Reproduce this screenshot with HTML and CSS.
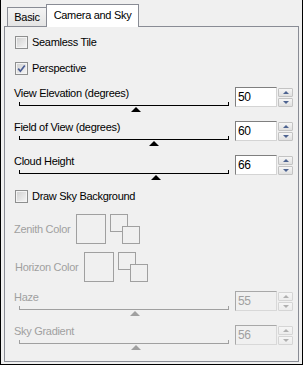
FILE: index.html
```html
<!DOCTYPE html>
<html lang="en">
<head>
    <meta charset="UTF-8">
    <title>Camera and Sky</title>
    <link rel="stylesheet" href="styles.css">
</head>
<body>
    <div class="window">
        <div class="tabs">
            <div class="tab">Basic</div>
            <div class="tab active">Camera and Sky</div>
        </div>
        <div class="panel">
            <label class="check first"><span class="cb"></span>Seamless Tile</label>
            <label class="check second"><span class="cb"><svg width="9" height="9" viewBox="0 0 9 9"><path d="M1.2 4.6 L3.4 7.2 L7.8 1.4" fill="none" stroke="#4a5d94" stroke-width="1.7"/></svg></span>Perspective</label>

            <div class="slider top-slider">
                <div class="slider-main">
                    <div class="slider-label">View Elevation (degrees)</div>
                    <div class="track"><span class="thumb" style="left:111px"></span></div>
                </div>
                <div class="num">50</div>
                <div class="spin"><span class="btn"><i class="up"></i></span><span class="btn"><i class="down"></i></span></div>
            </div>
            <div class="slider">
                <div class="slider-main">
                    <div class="slider-label">Field of View (degrees)</div>
                    <div class="track"><span class="thumb" style="left:129px"></span></div>
                </div>
                <div class="num">60</div>
                <div class="spin"><span class="btn"><i class="up"></i></span><span class="btn"><i class="down"></i></span></div>
            </div>
            <div class="slider">
                <div class="slider-main">
                    <div class="slider-label">Cloud Height</div>
                    <div class="track"><span class="thumb" style="left:131px"></span></div>
                </div>
                <div class="num">66</div>
                <div class="spin"><span class="btn"><i class="up"></i></span><span class="btn"><i class="down"></i></span></div>
            </div>

            <label class="check"><span class="cb"></span>Draw Sky Background</label>

            <div class="color-row zenith">
                <span class="color-label">Zenith Color</span>
                <span class="swatch"></span>
                <span class="swap"><span class="mini"></span><span class="mini back"></span></span>
            </div>
            <div class="color-row horizon">
                <span class="color-label">Horizon Color</span>
                <span class="swatch"></span>
                <span class="swap"><span class="mini"></span><span class="mini back"></span></span>
            </div>

            <div class="slider disabled haze">
                <div class="slider-main">
                    <div class="slider-label">Haze</div>
                    <div class="track"><span class="thumb" style="left:110px"></span></div>
                </div>
                <div class="num">55</div>
                <div class="spin"><span class="btn"><i class="up"></i></span><span class="btn"><i class="down"></i></span></div>
            </div>
            <div class="slider disabled">
                <div class="slider-main">
                    <div class="slider-label">Sky Gradient</div>
                    <div class="track"><span class="thumb" style="left:111px"></span></div>
                </div>
                <div class="num">56</div>
                <div class="spin"><span class="btn"><i class="up"></i></span><span class="btn"><i class="down"></i></span></div>
            </div>
        </div>
    </div>
</body>
</html>
```

FILE: styles.css
```css
body {
    margin: 0;
    padding: 0;
    font-family: "Liberation Sans", Arial, sans-serif;
    font-size: 11px;
    letter-spacing: -0.3px;
    color: #000;
    background: #f0f0f0;
}

.window {
    width: 303px;
    height: 365px;
    box-sizing: border-box;
    border: 1px solid #000;
    border-top: none;
    padding: 0 3px 2px 3px;
    background: #f0f0f0;
    display: flex;
    flex-direction: column;
}

/* tabs */
.tabs {
    display: flex;
    align-items: flex-end;
    height: 26px;
    padding-left: 3px;
}

.tab {
    width: 40px;
    height: 19px;
    box-sizing: border-box;
    border: 1px solid #898c95;
    border-bottom: none;
    background: linear-gradient(#f4f4f4, #e4e4e4);
    text-align: center;
    line-height: 19px;
}

.tab.active {
    width: 93px;
    height: 23px;
    margin-left: -1px;
    margin-bottom: -1px;
    background: #fff;
    line-height: 21px;
    position: relative;
    z-index: 1;
}

/* panel */
.panel {
    flex: 1;
    border: 1px solid #898c95;
    background: #f0f0f0;
    padding-left: 9px;
}

.check {
    display: flex;
    align-items: center;
    height: 14px;
    margin-left: 1px;
}

.check.first {
    margin-top: 8px;
}

.check.second {
    margin-top: 12px;
}

.cb {
    width: 13px;
    height: 13px;
    box-sizing: border-box;
    border: 1px solid #8e8f8f;
    background: linear-gradient(135deg, #cfcfcf, #f7f7f7);
    box-shadow: inset 0 0 0 1px #f4f4f4;
    margin-right: 4px;
    display: flex;
    align-items: center;
    justify-content: center;
}

.cb svg {
    display: block;
}

/* sliders */
.slider {
    display: flex;
    height: 34px;
}

.top-slider {
    margin-top: 12px;
}

.slider-main {
    width: 215px;
}

.slider-label {
    height: 13px;
    line-height: 13px;
}

.track {
    position: relative;
    margin: 2px 0 0 5px;
    width: 210px;
    height: 3px;
    box-sizing: content-box;
    border: 1px solid #000;
    border-top: none;
    margin-left: 5px;
    width: 208px;
}

.thumb {
    position: absolute;
    top: 5px;
    width: 0;
    height: 0;
    border-left: 5px solid transparent;
    border-right: 5px solid transparent;
    border-bottom: 5px solid #000;
}

.num {
    margin-left: 6px;
    width: 42px;
    height: 20px;
    box-sizing: border-box;
    border: 1px solid;
    border-color: #7f7f7f #d4d4d4 #d4d4d4 #7f7f7f;
    background: #fff;
    padding-left: 2px;
    line-height: 18px;
    font-size: 12px;
}

.spin {
    margin: 1px 0 0 1px;
    width: 15px;
    display: flex;
    flex-direction: column;
    gap: 1px;
}

.btn {
    height: 8px;
    border: 1px solid #c3c3c3;
    border-radius: 1px;
    background: linear-gradient(#f6f6f6, #e0e0e0);
    display: flex;
    align-items: center;
    justify-content: center;
    box-sizing: content-box;
    height: 7px;
}

.up {
    width: 0;
    height: 0;
    border-left: 3px solid transparent;
    border-right: 3px solid transparent;
    border-bottom: 3px solid #4d6390;
}

.down {
    width: 0;
    height: 0;
    border-left: 3px solid transparent;
    border-right: 3px solid transparent;
    border-top: 3px solid #4d6390;
}

/* colour pickers */
.color-row {
    display: flex;
    align-items: center;
    height: 30px;
    color: #a0a0a0;
}

.color-row.zenith {
    margin-top: 11px;
}

.color-row.horizon {
    margin-top: 8px;
    margin-left: 1px;
}

.color-label {
    margin-right: 6px;
}

.swatch {
    width: 30px;
    height: 30px;
    box-sizing: border-box;
    border: 1px solid #a0a0a0;
}

.swap {
    position: relative;
    width: 30px;
    height: 30px;
    margin-left: 4px;
}

.mini {
    position: absolute;
    left: 0;
    top: 0;
    width: 18px;
    height: 18px;
    box-sizing: border-box;
    border: 1px solid #a0a0a0;
    background: #f0f0f0;
}

.mini.back {
    left: 12px;
    top: 12px;
}

/* disabled state */
.slider.haze {
    margin-top: 9px;
}

.disabled {
    color: #a0a0a0;
}

.disabled .track {
    border-color: #a0a0a0;
}

.disabled .thumb {
    border-bottom-color: #a0a0a0;
}

.disabled .num {
    background: #f0f0f0;
    border-color: #a8a8a8 #d8d8d8 #d8d8d8 #a8a8a8;
    color: #a0a0a0;
}

.disabled .btn {
    border-color: #d5d5d5;
    background: linear-gradient(#f6f6f6, #ececec);
}

.disabled .up {
    border-bottom-color: #b0b0b0;
}

.disabled .down {
    border-top-color: #b0b0b0;
}
```
